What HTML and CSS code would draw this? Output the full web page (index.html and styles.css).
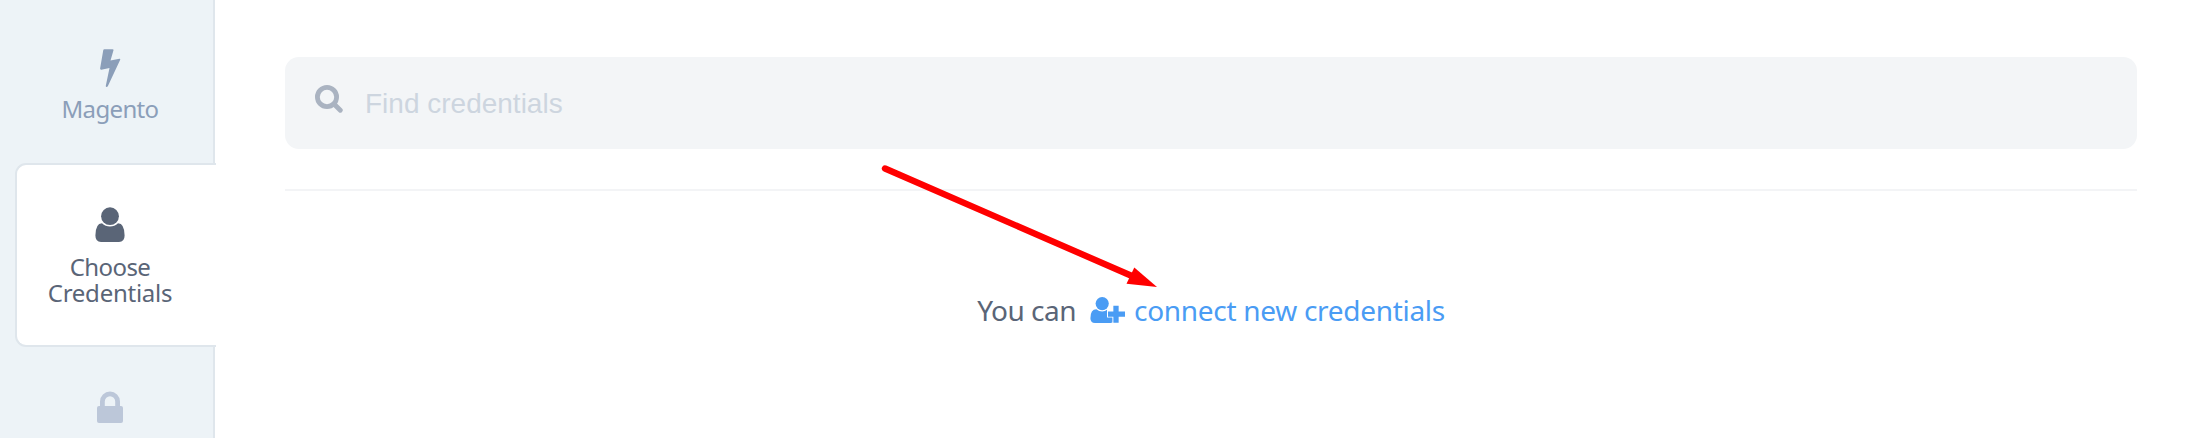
FILE: index.html
```html
<!DOCTYPE html>
<html lang="en">
<head>
<meta charset="utf-8">
<title>Choose Credentials</title>
<link rel="stylesheet" href="styles.css">
</head>
<body>
<div class="app">
  <nav class="steps">
    <a class="step step-done">
      <svg class="bolt" viewBox="0 0 22 40" aria-hidden="true"><path d="M5.3 1.3H13.5Q14.8 1.3 14.5 2.3L11.5 12.5L20.4 10.7Q21.6 10.6 21.2 11.8L8.8 38.2Q8.3 39 7.4 38.9Q6.6 38.7 6.8 37.7L10.5 20L2.3 21.7Q.9 21.8 1.1 20.6L4.3 2.1Q4.5 1.3 5.3 1.3Z"/></svg>
      <span class="label magento">Magento</span>
    </a>
    <a class="step step-active">
      <svg class="user" viewBox="0 0 30 36" aria-hidden="true"><circle cx="15" cy="9.2" r="8.9"/><path d="M7 16.2Q10.5 19.5 15 19.5T23 16.2Q29.6 16.4 29.6 28.6Q29.6 35 24 35H6Q.4 35 .4 28.6Q.4 16.4 7 16.2Z"/></svg>
      <span class="label choose">Choose</span>
      <span class="label credentials">Credentials</span>
    </a>
    <a class="step step-next">
      <svg class="lock" viewBox="0 0 26 32" aria-hidden="true"><path d="M5.4 16V10.5A7.6 7.6 0 0 1 20.6 10.5V16" fill="none" stroke="currentColor" stroke-width="4.8"/><rect y="15" width="26" height="17" rx="2"/></svg>
    </a>
  </nav>
  <main class="content">
    <label class="search">
      <svg class="magnifier" viewBox="0 0 28 28" aria-hidden="true"><circle cx="12" cy="12" r="9.6"/><path d="M19 19L25.3 25.3"/></svg>
      <input class="search-input" type="text" placeholder="Find credentials">
    </label>
    <p class="hint">
      <span class="hint-text">You can</span>
      <a class="connect">
        <svg class="user-plus" viewBox="0 0 36 28" aria-hidden="true"><circle cx="12.2" cy="7.6" r="6.6"/><path d="M6.4 13.2Q9 15.4 12.2 15.4T17 13.7V21.6H22.4V26.4Q21 27 18.5 27H5Q.4 27 .4 22.2Q.4 13.2 6.4 13.2Z"/><path class="plus" d="M18 18.2H35M26 9.7V26.7"/></svg>
        <span class="connect-text">connect new credentials</span>
      </a>
    </p>
  </main>
  <svg class="arrow" viewBox="0 0 280 126" aria-hidden="true"><path d="M5 5.5L252 113" stroke="#f00" stroke-width="6.4" stroke-linecap="round"/><path d="M277 124L254.3 104.5L246.5 120.7Z" fill="#f00"/></svg>
</div>
</body>
</html>
```
FILE: styles.css
```css
* { box-sizing: border-box; }
body { margin: 0; background: #fff; font-family: "Noto Sans", "Open Sans", sans-serif; }
svg { display: block; flex: none; fill: currentColor; }
.app { position: relative; display: flex; height: 438px; overflow: hidden; }

.steps { width: 215px; flex: none; background: #edf3f7; border-right: 2px solid #dfe6ec; }
.step { display: flex; flex-direction: column; align-items: center; }
.step-done { height: 163px; padding: 48px 0 0 7px; color: #8b9eb9; }
.step-active {
  position: relative; width: 201px; height: 184px; margin-left: 15px; padding: 42px 13px 0 0;
  background: #fff; border: 2px solid #dfe6ec; border-right: 0; border-radius: 11px 0 0 11px; color: #5a6577;
}
.step-next { padding: 44px 0 0 7px; color: #bcc7d9; }
.bolt { width: 22px; height: 40px; }
.user { width: 30px; height: 36px; }
.lock { width: 26px; height: 32px; }
.label { font-size: 24px; line-height: 26px; white-space: nowrap; }
.magento { margin-top: 8px; letter-spacing: -.65px; }
.choose { margin-top: 11px; letter-spacing: -.6px; }
.credentials { letter-spacing: -.25px; }

.content { flex: 1; padding: 57px 57px 0 70px; }
.search { display: flex; height: 92px; padding: 0 30px; background: #f3f5f7; border-radius: 14px; }
.magnifier { width: 28px; height: 28px; margin-top: 28px; fill: none; stroke: #aab3c1; stroke-width: 4.8; stroke-linecap: round; }
.search-input { flex: 1; margin: 0 0 0 22px; padding: 2px 0 0; border: 0; outline: 0; background: none; font: 28px "Liberation Sans", Arial, sans-serif; }
.search-input::placeholder { color: #cdd5df; opacity: 1; }
.hint {
  display: flex; justify-content: center; margin: 40px 0 0; padding-top: 98px; border-top: 2px solid #f3f4f6;
  font-size: 28px; line-height: 42px; color: #5a6577; white-space: nowrap;
}
.hint-text { letter-spacing: -.5px; }
.connect { display: flex; margin-left: 14px; color: #4a9cf4; }
.user-plus { width: 36px; height: 28px; margin-top: 7px; }
.plus { fill: none; stroke: currentColor; stroke-width: 5.3; }
.connect-text { margin-left: 8px; letter-spacing: -.3px; }
.arrow { position: absolute; left: 880px; top: 163px; width: 280px; height: 126px; }
```
